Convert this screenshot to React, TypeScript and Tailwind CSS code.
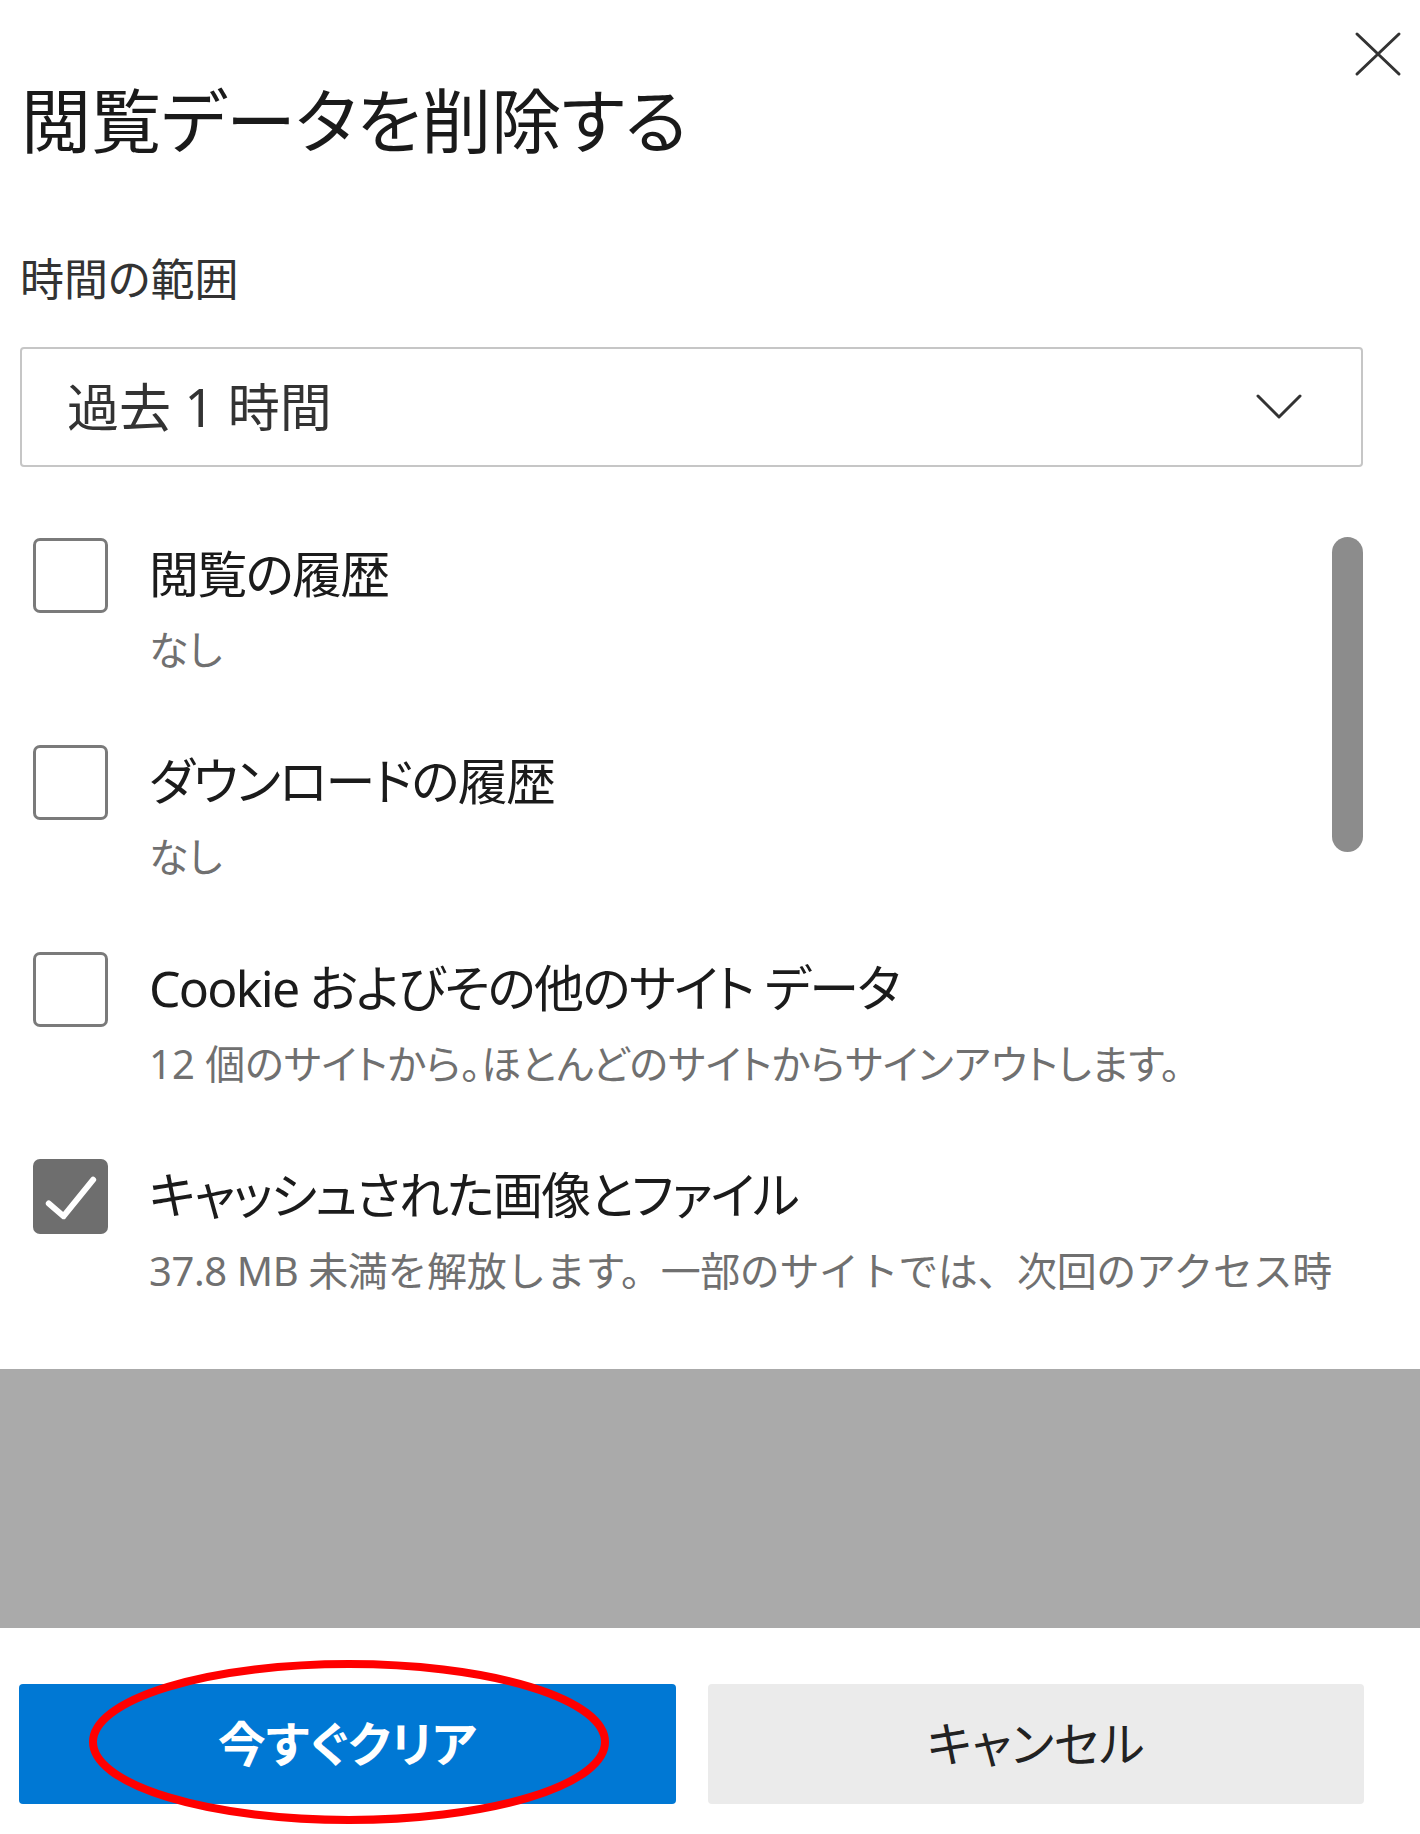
import { useState } from 'react'

const font = "font-['Noto_Sans','Noto_Sans_CJK_JP',sans-serif] [font-feature-settings:'palt']"

type Item = { label: string; sub: string; checked: boolean; wide?: boolean }

const items: Item[] = [
	{ label: '閲覧の履歴', sub: 'なし', checked: false },
	{ label: 'ダウンロードの履歴', sub: 'なし', checked: false },
	{
		label: 'Cookie およびその他のサイト データ',
		sub: '12 個のサイトから。ほとんどのサイトからサインアウトします。',
		checked: false,
	},
	{
		label: 'キャッシュされた画像とファイル',
		sub: '37.8 MB 未満を解放します。一部のサイトでは、次回のアクセス時',
		checked: true,
		wide: true,
	},
]

const CloseIcon = () => (
	<svg width="48" height="46" viewBox="0 0 48 46" fill="none">
		<path d="M3 3 L45 43 M45 3 L3 43" stroke="#333" strokeWidth="3" strokeLinecap="round" />
	</svg>
)

const Chevron = () => (
	<svg width="48" height="28" viewBox="0 0 48 28" fill="none">
		<path d="M3 3 L24 24 L45 3" stroke="#333" strokeWidth="3" strokeLinecap="round" strokeLinejoin="round" />
	</svg>
)

const Checkbox = ({ checked, onClick }: { checked: boolean; onClick: () => void }) =>
	checked ? (
		<button
			onClick={onClick}
			className="w-[75px] h-[75px] shrink-0 rounded-[7px] bg-[#6e6e6e] flex items-center justify-center"
		>
			<svg width="75" height="75" viewBox="0 0 76 76" fill="none">
				<path d="M16 45 L31 58 L61 21" stroke="#fff" strokeWidth="6" strokeLinecap="round" strokeLinejoin="round" />
			</svg>
		</button>
	) : (
		<button
			onClick={onClick}
			className="w-[75px] h-[75px] shrink-0 rounded-[7px] border-[3px] border-[#7a7a7a] bg-white"
		/>
	)

export default function App() {
	const [checks, setChecks] = useState(items.map((i) => i.checked))

	return (
		<div className={`relative w-[1420px] min-h-[1834px] bg-white text-[#1b1b1b] ${font}`}>
			<div className="flex items-start justify-between pl-[21px] pr-[18px]">
				<h1 className="mt-[86px] text-[70px] leading-[70px] font-normal text-[#1a1a1a]">
					閲覧データを削除する
				</h1>
				<button className="mt-[31px]">
					<CloseIcon />
				</button>
			</div>

			<div className="pl-[20px] pr-[57px]">
				<div className="mt-[100px] text-[44px] leading-[46px] text-[#333]">時間の範囲</div>

				<div className="mt-[45px] h-[120px] border-2 border-[#c6c6c6] rounded-[4px] flex items-center justify-between pl-[45px] pr-[58px]">
					<span className="text-[52px] leading-[58px] text-[#333]">過去 1 時間</span>
					<Chevron />
				</div>

				<div className="h-[902px] flex overflow-hidden">
					<div className="flex-1 min-w-0 pt-[71px] pl-[13px] flex flex-col gap-[71px]">
						{items.map((item, i) => (
							<div key={item.label} className="flex gap-[41px]">
								<Checkbox
									checked={checks[i]}
									onClick={() => setChecks((prev) => prev.map((c, j) => (j === i ? !c : c)))}
								/>
								<div className="min-w-0">
									<div className="mt-[8px] text-[50px] leading-[56px] tracking-[-0.035em] whitespace-nowrap">
										{item.label}
									</div>
									<div
										className={`mt-[24px] text-[40px] leading-[48px] text-[#707070] whitespace-nowrap ${
											item.wide ? '[font-feature-settings:normal] tracking-[-0.01em]' : ''
										}`}
									>
										{item.sub}
									</div>
								</div>
							</div>
						))}
					</div>
					<div className="w-[31px] h-[315px] mt-[70px] rounded-full bg-[#8c8c8c] shrink-0" />
				</div>
			</div>

			<div className="h-[259px] bg-[#aaaaaa]" />

			<div className="mt-[56px] flex gap-[32px] pl-[19px] pr-[56px]">
				<button className="flex-1 h-[120px] rounded-[4px] bg-[#0078d4] text-white text-[48px] font-bold">
					今すぐクリア
				</button>
				<button className="flex-1 h-[120px] rounded-[4px] bg-[#ebebeb] text-[#222] text-[48px]">
					キャンセル
				</button>
			</div>

			{/* red annotation circle */}
			<svg
				className="absolute left-[86px] top-[1657px] pointer-events-none"
				width="526"
				height="170"
				viewBox="0 0 526 170"
				fill="none"
			>
				<ellipse cx="263" cy="85" rx="256" ry="78" stroke="#ff0000" strokeWidth="8" />
			</svg>
		</div>
	)
}
